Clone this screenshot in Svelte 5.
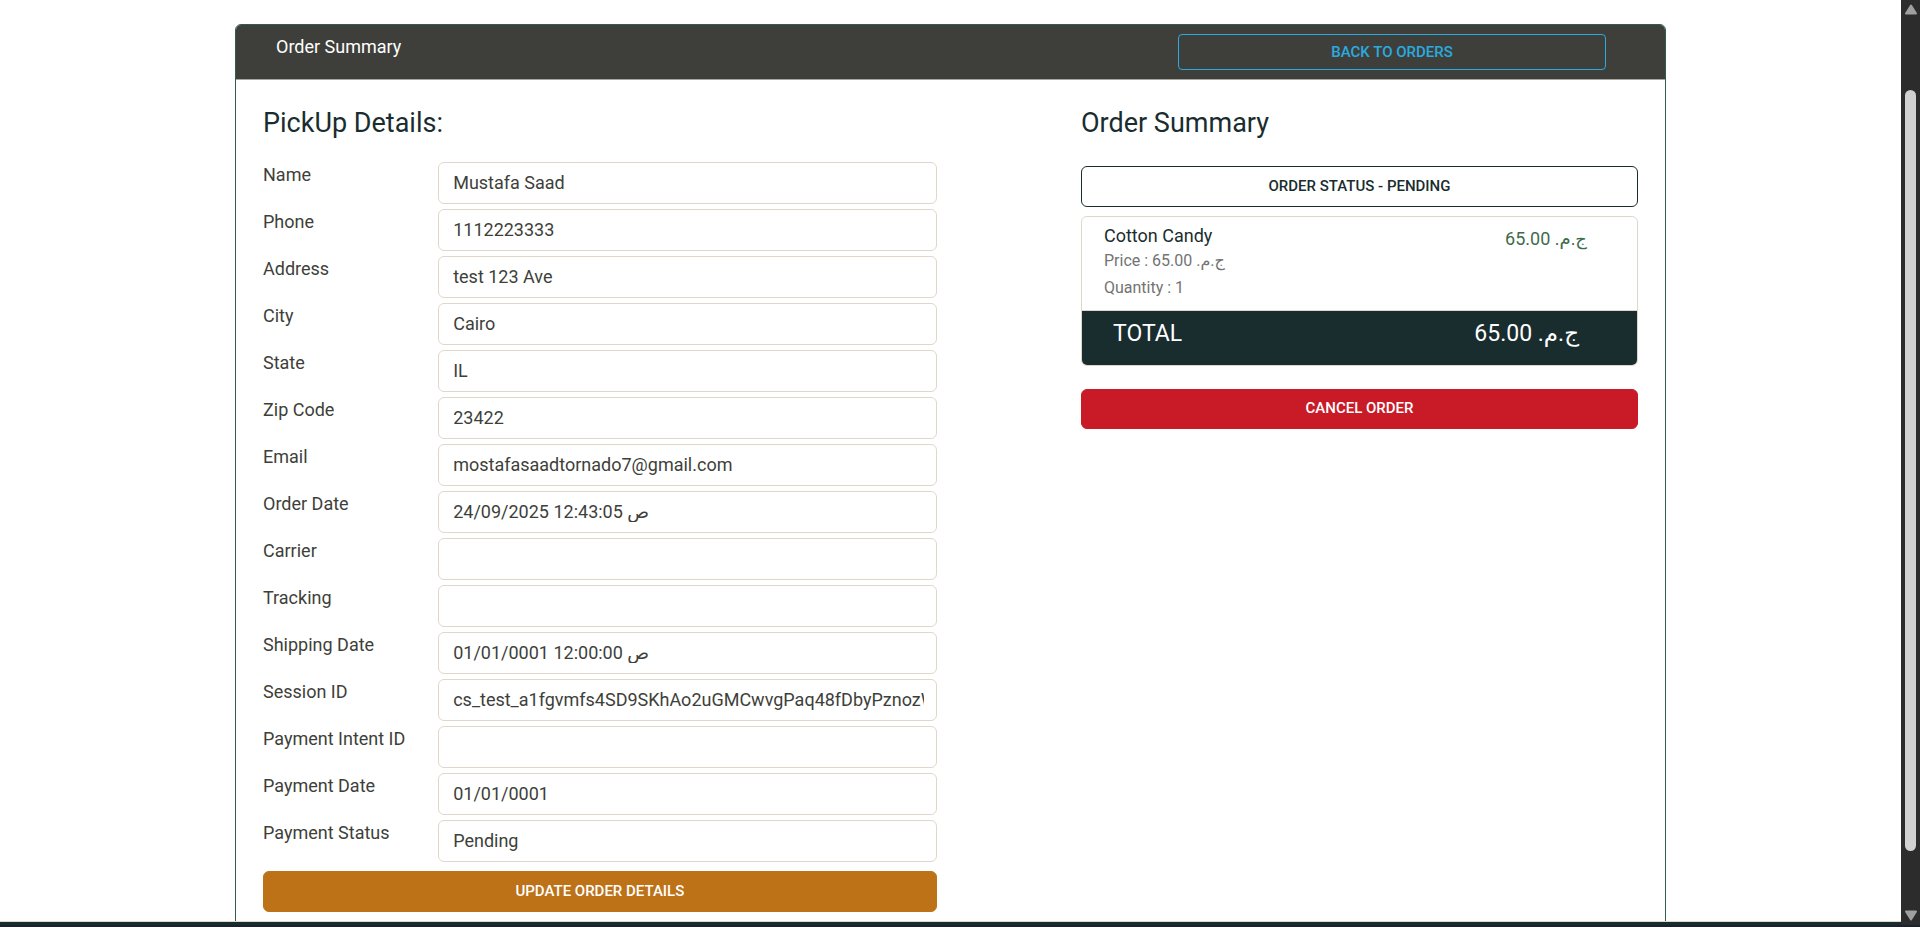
<script>
  const fields = [
    ['name', 'Name', 'Mustafa Saad'],
    ['phone', 'Phone', '1112223333'],
    ['address', 'Address', 'test 123 Ave'],
    ['city', 'City', 'Cairo'],
    ['state', 'State', 'IL'],
    ['zip', 'Zip Code', '23422'],
    ['email', 'Email', 'mostafasaadtornado7@gmail.com'],
    ['order-date', 'Order Date', '24/09/2025 12:43:05 ص'],
    ['carrier', 'Carrier', ''],
    ['tracking', 'Tracking', ''],
    ['shipping-date', 'Shipping Date', '01/01/0001 12:00:00 ص'],
    ['session', 'Session ID', 'cs_test_a1fgvmfs4SD9SKhAo2uGMCwvgPaq48fDbyPznozW'],
    ['intent', 'Payment Intent ID', ''],
    ['payment-date', 'Payment Date', '01/01/0001'],
    ['payment-status', 'Payment Status', 'Pending']
  ];
  // The trailing right-to-left mark keeps the last full stop inside the Arabic run.
  const amount = '65.00 ج.م.\u200f';
</script>

<div class="window">
  <div class="view">
    <main>
      <form class="card" onsubmit={(e) => e.preventDefault()}>
        <header>
          <span class="title">Order Summary</span>
          <a class="btn back" href="#orders">Back to Orders</a>
        </header>
        <div class="body">
          <section class="details">
            <h1>PickUp Details:</h1>
            <div class="fields">
              {#each fields as [id, label, value]}
                <div class="field">
                  <label for={id}>{label}</label>
                  <input {id} type="text" {value} />
                </div>
              {/each}
            </div>
            <button class="btn update" type="submit">Update Order Details</button>
          </section>
          <section class="summary">
            <h1>Order Summary</h1>
            <button class="btn status" type="button">Order Status - Pending</button>
            <ul>
              <li class="item">
                <div>
                  <h2>Cotton Candy</h2>
                  <p>Price : {amount}</p>
                  <p>Quantity : 1</p>
                </div>
                <span class="sum">{amount}</span>
              </li>
              <li class="total">
                <span>TOTAL</span>
                <span>{amount}</span>
              </li>
            </ul>
            <button class="btn cancel" type="button">Cancel Order</button>
          </section>
        </div>
      </form>
    </main>
    <footer></footer>
  </div>
  <div class="scrollbar" aria-hidden="true">
    <svg width="14" height="11" viewBox="0 0 14 11"><path d="M7 1.5 12 9.5H2Z" /></svg>
    <div class="track"><div class="thumb"></div></div>
    <svg width="14" height="11" viewBox="0 0 14 11"><path d="M7 9.5 12 1.5H2Z" /></svg>
  </div>
</div>

<style>
  :global(body) {
    margin: 0;
    background: #1d212b;
  }

  * {
    box-sizing: border-box;
  }

  .window {
    display: flex;
    height: 100vh;
    padding-bottom: 2px;
    overflow: hidden;
    font-family: Roboto, 'DejaVu Sans', sans-serif;
    font-size: 18px;
    line-height: 27px;
    color: #3e3f3a;
  }

  .view {
    flex: 1;
    min-width: 0;
    display: flex;
    flex-direction: column;
    background: #fff;
  }

  main {
    flex: 1;
    min-height: 0;
    overflow: hidden;
    padding: 24px 16px 0;
  }

  footer {
    height: 4px;
    border-top: 1px solid #dfd7ca;
    background: #192d2f;
  }

  .card {
    max-width: 1431px;
    min-height: 100%;
    margin: 0 auto;
    padding-bottom: 32px;
    border: 1px solid #325d4b;
    border-radius: 6px;
    overflow: hidden;
  }

  header {
    display: flex;
    align-items: flex-start;
    justify-content: space-between;
    padding: 9px 59px 9px 40px;
    border-bottom: 1px solid #aaa79e;
    background: #3e3f3a;
    color: #fff;
  }

  .title {
    line-height: 26px;
  }

  .btn {
    display: block;
    width: 100%;
    padding: 8px 16px;
    border: 1px solid;
    border-radius: 6px;
    background: transparent;
    font: 500 15px/23px Roboto, sans-serif;
    text-align: center;
    text-decoration: none;
    text-transform: uppercase;
  }

  .back {
    width: 428px;
    padding: 6px 16px 5px;
    border-radius: 4px;
    color: #29abe0;
  }

  .body {
    display: flex;
    justify-content: space-between;
    padding: 24px 27px 0;
  }

  .details {
    width: 49%;
  }

  .summary {
    width: 557px;
  }

  h1 {
    margin: 0;
    font-size: 27px;
    line-height: 38px;
    font-weight: 400;
    color: #192d2f;
  }

  .fields {
    display: grid;
    gap: 5px;
    margin: 20px 0 9px;
  }

  .field {
    display: grid;
    grid-template-columns: 26% 1fr;
  }

  label {
    line-height: 26px;
  }

  input {
    min-width: 0;
    height: 42px;
    padding: 0 12px 2px 14px;
    border: 1px solid #dfd7ca;
    border-radius: 6px;
    background: #fff;
    font: inherit;
    color: inherit;
  }

  .update {
    border-color: #bd7217;
    background: #bd7217;
    color: #fff;
  }

  .status {
    margin-top: 24px;
    color: #192d2f;
  }

  ul {
    margin: 9px 0 23px;
    padding: 0;
    border: 1px solid #dfd7ca;
    border-radius: 6px;
    overflow: hidden;
    list-style: none;
  }

  li {
    display: flex;
    justify-content: space-between;
  }

  .item {
    padding: 8px 50px 9px 22px;
    border-bottom: 1px solid #dfd7ca;
  }

  h2 {
    margin: 0;
    font-size: 18px;
    line-height: 22px;
    font-weight: 400;
    color: #192d2f;
  }

  p {
    margin: 0;
    font-size: 16px;
    line-height: 27px;
    color: #737373;
  }

  .sum {
    color: #3e6b4b;
  }

  .total {
    padding: 6px 58px 15px 31px;
    background: #192d2f;
    color: #fff;
    font-size: 23px;
    line-height: 33px;
  }

  .cancel {
    padding: 7px 16px 8px;
    border-color: #c91a28;
    background: #c91a28;
    color: #fff;
  }

  .scrollbar {
    width: 19px;
    display: flex;
    flex-direction: column;
    align-items: center;
    padding: 4px 0;
    background: #2c2c2c;
  }

  .scrollbar path {
    fill: #9f9f9f;
    stroke: #9f9f9f;
    stroke-width: 2;
    stroke-linejoin: round;
  }

  .track {
    flex: 1;
    padding: 75px 0 59px;
  }

  .thumb {
    width: 11px;
    height: 100%;
    border-radius: 6px;
    background: #d1d1d1;
  }
</style>
